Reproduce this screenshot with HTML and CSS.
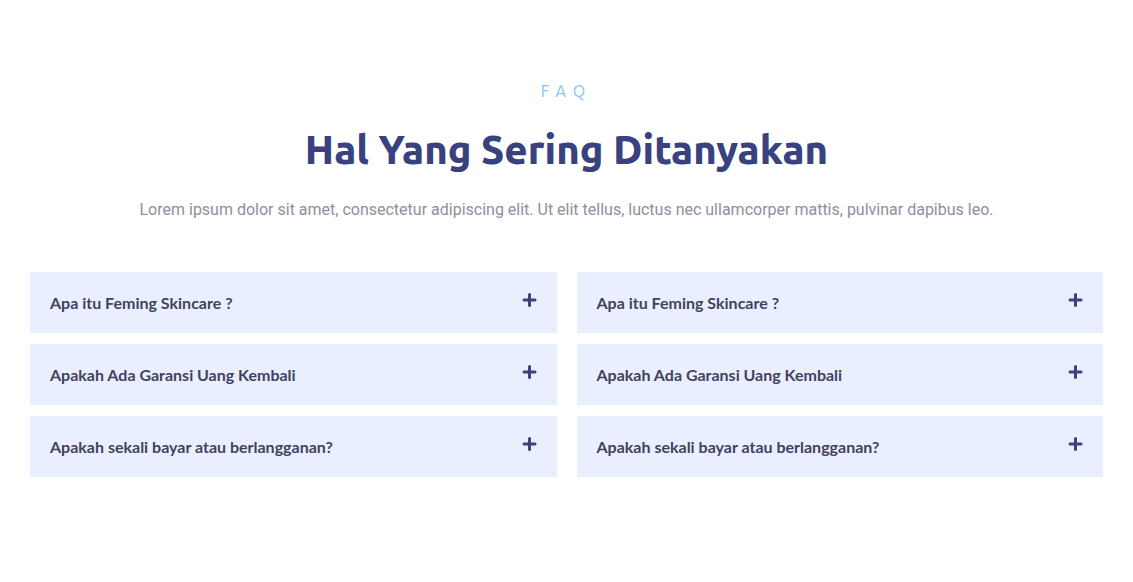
FILE: index.html
```html
<!DOCTYPE html>
<html lang="id">
<head>
<meta charset="utf-8">
<meta name="viewport" content="width=device-width, initial-scale=1">
<title>FAQ</title>
<link rel="stylesheet" href="styles.css">
</head>
<body>
<main class="faq">
  <header class="faq-header">
    <p class="eyebrow">FAQ</p>
    <h1 class="title">Hal Yang Sering Ditanyakan</h1>
    <p class="intro">Lorem ipsum dolor sit amet, consectetur adipiscing elit. Ut elit tellus, luctus nec ullamcorper mattis, pulvinar dapibus leo.</p>
  </header>
  <div class="columns">
    <div class="accordion">
      <button class="item" type="button" aria-expanded="false"><span>Apa itu Feming Skincare ?</span><svg class="plus" viewBox="0 0 15 16" aria-hidden="true"><path d="M7.5 2.5v11M2 8h11"/></svg></button>
      <button class="item" type="button" aria-expanded="false"><span>Apakah Ada Garansi Uang Kembali</span><svg class="plus" viewBox="0 0 15 16" aria-hidden="true"><path d="M7.5 2.5v11M2 8h11"/></svg></button>
      <button class="item" type="button" aria-expanded="false"><span>Apakah sekali bayar atau berlangganan?</span><svg class="plus" viewBox="0 0 15 16" aria-hidden="true"><path d="M7.5 2.5v11M2 8h11"/></svg></button>
    </div>
    <div class="accordion">
      <button class="item" type="button" aria-expanded="false"><span>Apa itu Feming Skincare ?</span><svg class="plus" viewBox="0 0 15 16" aria-hidden="true"><path d="M7.5 2.5v11M2 8h11"/></svg></button>
      <button class="item" type="button" aria-expanded="false"><span>Apakah Ada Garansi Uang Kembali</span><svg class="plus" viewBox="0 0 15 16" aria-hidden="true"><path d="M7.5 2.5v11M2 8h11"/></svg></button>
      <button class="item" type="button" aria-expanded="false"><span>Apakah sekali bayar atau berlangganan?</span><svg class="plus" viewBox="0 0 15 16" aria-hidden="true"><path d="M7.5 2.5v11M2 8h11"/></svg></button>
    </div>
  </div>
</main>
</body>
</html>
```
FILE: styles.css
```css
* {
  box-sizing: border-box;
}

body {
  margin: 0;
  background: #fff;
}

.faq {
  padding: 80px 30px;
}

.faq-header {
  text-align: center;
}

.eyebrow {
  margin: 0;
  color: #86c5f4;
  font: 400 16px/22px Ubuntu, "Noto Sans", sans-serif;
  letter-spacing: 7px;
}

.title {
  margin: 26px 0 0;
  color: #39417f;
  font: 800 40px/44px Ubuntu, "Noto Sans", sans-serif;
}

.intro {
  margin: 26px 0 0;
  color: #8c90a0;
  font: 400 16px/24px Roboto, sans-serif;
}

.columns {
  display: grid;
  grid-template-columns: 1fr 1fr;
  gap: 20px;
  margin-top: 50px;
}

.accordion {
  display: grid;
  gap: 11px;
}

.item {
  display: flex;
  align-items: flex-start;
  justify-content: space-between;
  padding: 20px;
  border: 0;
  background: #e9efff;
  color: #434260;
  font: 700 16px/21px Lato, sans-serif;
  text-align: left;
  cursor: pointer;
}

.plus {
  flex: none;
  width: 15px;
  height: 16px;
  fill: none;
  stroke: #39417f;
  stroke-width: 3;
  stroke-linecap: round;
}
```
